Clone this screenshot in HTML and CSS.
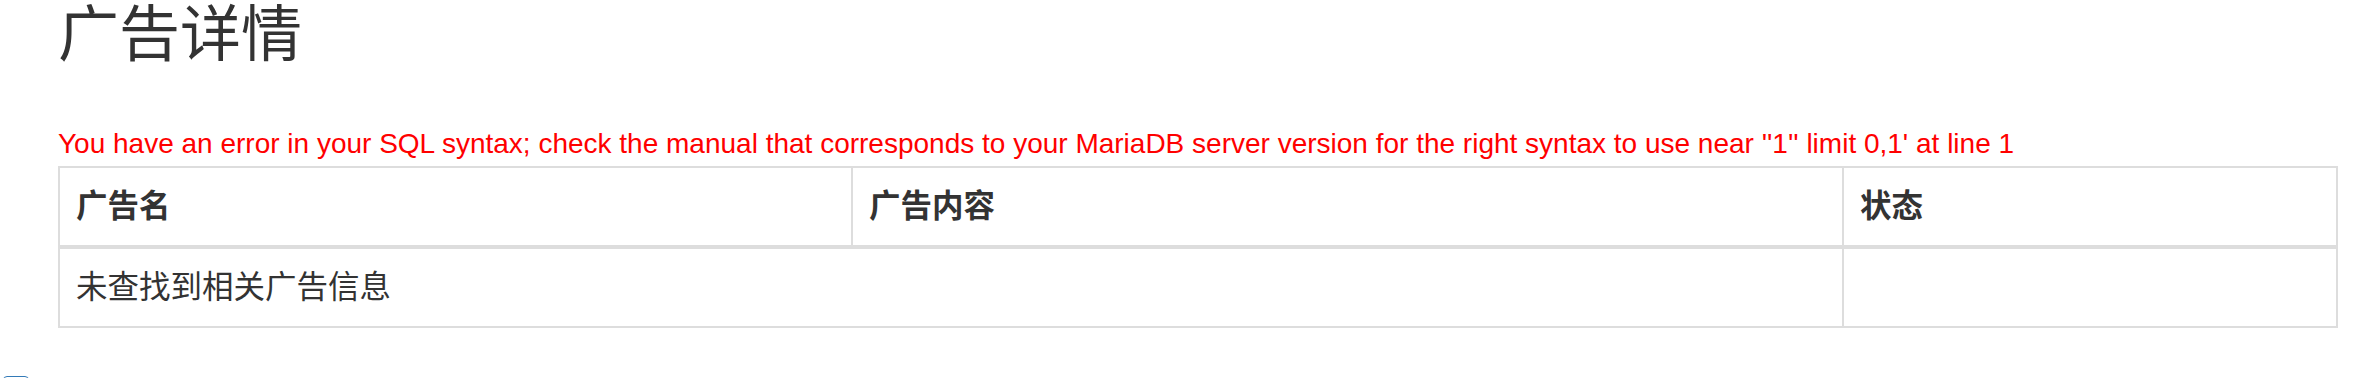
FILE: index.html
```html
<!DOCTYPE html>
<html lang="zh-CN">
<head>
    <meta charset="UTF-8">
    <meta name="viewport" content="width=device-width, initial-scale=1.0">
    <title>广告详情</title>
    <link rel="stylesheet" href="styles.css">
</head>
<body>
    <div class="content">
        <h1 class="page-title">广告详情</h1>

        <!-- 数据库报错 -->
        <div class="sql-error">You have an error in your SQL syntax; check the manual that corresponds to your MariaDB server version for the right syntax to use near ''1'' limit 0,1' at line 1</div>

        <table class="ad-table">
            <colgroup>
                <col class="col-name">
                <col class="col-body">
                <col>
            </colgroup>
            <thead>
                <tr>
                    <th>广告名</th>
                    <th>广告内容</th>
                    <th>状态</th>
                </tr>
            </thead>
            <tbody>
                <tr>
                    <td colspan="2">未查找到相关广告信息</td>
                    <td></td>
                </tr>
            </tbody>
        </table>
    </div>

    <div class="pager">
        <a class="pager-btn" href="#"></a>
    </div>
</body>
</html>
```

FILE: styles.css
```css
body {
    margin: 0;
    padding: 0;
    font-family: "Liberation Sans", "Noto Sans CJK SC", sans-serif;
    color: #333;
    background: #fff;
}
.content {
    padding: 0 28px 0 58px;
}
.page-title {
    margin: 0;
    font-size: 61px;
    font-weight: normal;
    line-height: 70px;
}
/* 报错信息 */
.sql-error {
    margin-top: 52px;
    color: #f00;
    font-size: 28px;
    line-height: 44px;
}
/* 广告表格 */
.ad-table {
    width: 100%;
    border-collapse: collapse;
    table-layout: fixed;
    border: 2px solid #ddd;
}
.ad-table .col-name {
    width: 793px;
}
.ad-table .col-body {
    width: 991px;
}
.ad-table th,
.ad-table td {
    padding: 16px 16px;
    font-size: 31.5px;
    line-height: 45px;
    text-align: left;
    border: 2px solid #ddd;
}
.ad-table th {
    font-weight: bold;
    border-bottom: 4px solid #ddd;
}
.pager {
    padding: 48px 0 0 3px;
}
.pager-btn {
    display: block;
    width: 26px;
    height: 36px;
    border: 1px solid #337ab7;
    border-radius: 4px;
    box-sizing: border-box;
}
```
